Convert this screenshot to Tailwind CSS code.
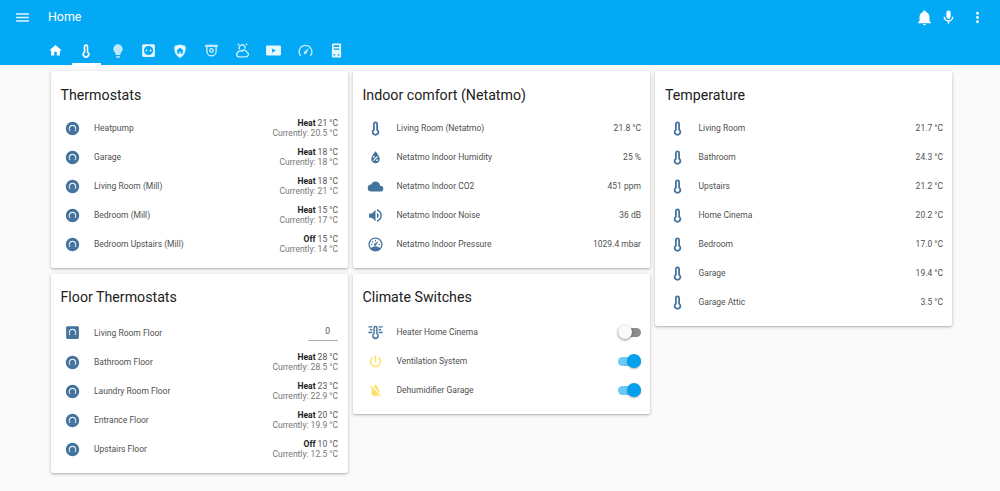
<!DOCTYPE html>
<html lang="en">
  <head>
    <meta charset="UTF-8" />
    <meta name="viewport" content="width=device-width, initial-scale=1.0" />
    <title>Home</title>
    <script src="https://cdn.jsdelivr.net/npm/@tailwindcss/browser@4"></script>
  </head>
  <body class="bg-[#fafafa] font-['Roboto',sans-serif] h-[491px] overflow-hidden">
    <!-- icon sheet -->
    <svg class="hidden">
      <symbol id="i-therm-outline" viewBox="0 0 24 24"><path d="M15.500 13V5.500A3.500 3.500 0 0 0 8.500 5.500V13A5.300 5.300 0 1 0 15.500 13M12 4.500A1 1 0 0 1 13 5.500V14.400A2.600 2.600 0 1 1 11 14.400V5.500A1 1 0 0 1 12 4.500Z" fill-rule="evenodd"/></symbol>
      <symbol id="i-thermostat" viewBox="0 0 24 24"><path fill-rule="evenodd" d="M12 2.500A9.500 9.500 0 1 1 12 21.500A9.500 9.500 0 1 1 12 2.500ZM12 6.800A5.400 5.400 0 0 0 8 15.800L9.200 14.900A3.900 3.900 0 1 1 14.800 14.900L16 15.800A5.400 5.400 0 0 0 12 6.800Z"/></symbol>
      <symbol id="i-thermostat-box" viewBox="0 0 24 24"><path fill-rule="evenodd" d="M5 3H19A2 2 0 0 1 21 5V19A2 2 0 0 1 19 21H5A2 2 0 0 1 3 19V5A2 2 0 0 1 5 3ZM12 6.800A5.400 5.400 0 0 0 8 15.800L9.200 14.900A3.900 3.900 0 1 1 14.800 14.900L16 15.800A5.400 5.400 0 0 0 12 6.800Z"/></symbol>
      <symbol id="i-drop" viewBox="0 0 24 24"><path fill-rule="evenodd" d="M12,3.25C12,3.25 6,10 6,14C6,17.32 8.69,20 12,20A6,6 0 0,0 18,14C18,10 12,3.25 12,3.25M14.47,9.97L15.53,11.03L9.53,17.03L8.47,15.97M9.75,10A1.25,1.25 0 0,1 11,11.25A1.25,1.25 0 0,1 9.75,12.5A1.25,1.25 0 0,1 8.5,11.25A1.25,1.25 0 0,1 9.75,10M14.25,14.5A1.25,1.25 0 0,1 15.5,15.75A1.25,1.25 0 0,1 14.25,17A1.25,1.25 0 0,1 13,15.75A1.25,1.25 0 0,1 14.25,14.5Z"/></symbol>
      <symbol id="i-cloud" viewBox="0 0 24 24"><path d="M6,19A5,5 0 0,1 1,14A5,5 0 0,1 6,9C7,6.65 9.3,5 12,5C15.43,5 18.24,7.66 18.5,11.03L19,11A4,4 0 0,1 23,15A4,4 0 0,1 19,19H6Z"/></symbol>
      <symbol id="i-volume" viewBox="0 0 24 24"><path d="M14,3.23V5.29C16.89,6.15 19,8.83 19,12C19,15.17 16.89,17.84 14,18.7V20.77C18,19.86 21,16.28 21,12C21,7.72 18,4.14 14,3.23M16.5,12C16.5,10.23 15.5,8.71 14,7.97V16C15.5,15.29 16.5,13.76 16.5,12M3,9V15H7L12,20V4L7,9H3Z"/></symbol>
      <symbol id="i-pressure" viewBox="0 0 24 24"><path fill-rule="evenodd" d="M12 2A10 10 0 1 1 12 22A10 10 0 1 1 12 2ZM12 4A8 8 0 0 0 5.700 17A9 9 0 0 1 18.300 17A8 8 0 0 0 12 4Z"/><path d="M16.500 7.500L13.200 12.400A1.700 1.700 0 1 1 10.900 10.600Z"/><path d="M5.500 11.200H7.600V12.600H5.500ZM7.600 7.200L9.100 8.600L8.100 9.600L6.700 8.200ZM11.300 5.600H12.700V7.700H11.300ZM16.400 11.200H18.500V12.600H16.400Z"/></symbol>
      <symbol id="i-radiator" viewBox="0 0 24 24"><path d="M15 13V5.500A3 3 0 0 0 9 5.500V13A4.800 4.800 0 1 0 15 13ZM12 4.500A1 1 0 0 1 13 5.500V14A2.500 2.500 0 1 1 11 14V5.500A1 1 0 0 1 12 4.500Z" fill-rule="evenodd"/><path d="M2 3H7.500V5H2ZM4 7H7.500V9H4ZM2 11H7.500V13H2ZM16.500 3H22V5H16.500ZM16.500 7H20V9H16.500ZM16.500 11H22V13H16.500Z"/></symbol>
      <symbol id="i-power" viewBox="0 0 24 24"><path d="M16.56,5.44L15.11,6.89C16.84,7.94 18,9.83 18,12A6,6 0 0,1 12,18A6,6 0 0,1 6,12C6,9.83 7.16,7.94 8.88,6.88L7.44,5.44C5.36,6.88 4,9.28 4,12A8,8 0 0,0 12,20A8,8 0 0,0 20,12C20,9.28 18.64,6.88 16.56,5.44M13,3H11V13H13"/></symbol>
      <symbol id="i-water-off" viewBox="0 0 24 24"><path d="M17.12,17.12L12.5,12.5L5.27,5.27L4,6.55L7.32,9.87C6.55,11.32 6,12.79 6,14A6,6 0 0,0 12,20C13.5,20 14.9,19.43 15.96,18.5L18.59,21.13L19.86,19.86L17.12,17.12M18,14C18,10 12,3.2 12,3.2C12,3.2 10.67,4.71 9.27,6.72L17.86,15.31C17.95,14.89 18,14.45 18,14Z"/></symbol>
    </svg>

    <header class="bg-[#03a9f4] h-[65px] text-white">
      <div class="h-[35px] flex items-center">
        <svg class="w-[17px] h-[17px] ml-[13.5px] fill-white/90" viewBox="0 0 24 24"><path d="M3,6H21V8H3V6M3,11H21V13H3V11M3,16H21V18H3V16Z"/></svg>
        <div class="ml-[17.5px] mb-[1px] text-[12.4px] leading-5">Home</div>
        <div class="ml-auto flex items-center">
          <svg class="w-[17px] h-[17px] fill-white" viewBox="0 0 24 24"><path d="M21,19V20H3V19L5,17V11C5,7.9 7.03,5.17 10,4.29C10,4.19 10,4.1 10,4A2,2 0 0,1 12,2A2,2 0 0,1 14,4C14,4.1 14,4.19 14,4.29C16.97,5.17 19,7.9 19,11V17L21,19M14,21A2,2 0 0,1 12,23A2,2 0 0,1 10,21"/></svg>
          <svg class="w-[17px] h-[17px] ml-[7px] fill-white" viewBox="0 0 24 24"><path d="M12,2A3,3 0 0,1 15,5V11A3,3 0 0,1 12,14A3,3 0 0,1 9,11V5A3,3 0 0,1 12,2M19,11C19,14.53 16.39,17.44 13,17.93V21H11V17.93C7.61,17.44 5,14.53 5,11H7A5,5 0 0,0 12,16A5,5 0 0,0 17,11H19Z"/></svg>
          <svg class="w-[17px] h-[17px] ml-[12px] mr-[14.5px] fill-white" viewBox="0 0 24 24"><path d="M12,16A2,2 0 0,1 14,18A2,2 0 0,1 12,20A2,2 0 0,1 10,18A2,2 0 0,1 12,16M12,10A2,2 0 0,1 14,12A2,2 0 0,1 12,14A2,2 0 0,1 10,12A2,2 0 0,1 12,10M12,4A2,2 0 0,1 14,6A2,2 0 0,1 12,8A2,2 0 0,1 10,6A2,2 0 0,1 12,4Z"/></svg>
        </div>
      </div>
      <nav class="h-[30px] flex pl-[39.5px]">
        <div class="w-[31.25px] h-[30px] flex items-center justify-center pt-[1px]">
          <svg class="w-[15px] h-[15px] fill-white" viewBox="0 0 24 24"><path d="M10,20V14H14V20H19V12H22L12,3L2,12H5V20H10Z"/></svg>
        </div>
        <div class="w-[31.25px] h-[30px] flex items-center justify-center pt-[1px] relative">
          <svg class="w-[16px] h-[16px] fill-white" viewBox="0 0 24 24"><use href="#i-therm-outline"/></svg>
          <div class="absolute left-[1px] right-[1px] bottom-0 h-[2px] bg-white"></div>
        </div>
        <div class="w-[31.25px] h-[30px] flex items-center justify-center pt-[1px] opacity-75">
          <svg class="w-[16px] h-[16px] fill-white" viewBox="0 0 24 24"><path d="M12,2A7,7 0 0,0 5,9C5,11.38 6.19,13.47 8,14.74V17A1,1 0 0,0 9,18H15A1,1 0 0,0 16,17V14.74C17.81,13.47 19,11.38 19,9A7,7 0 0,0 12,2M9,21A1,1 0 0,0 10,22H14A1,1 0 0,0 15,21V20H9V21Z"/></svg>
        </div>
        <div class="w-[31.25px] h-[30px] flex items-center justify-center pt-[1px] opacity-90">
          <svg class="w-[17px] h-[17px] fill-white" viewBox="0 0 24 24"><path fill-rule="evenodd" d="M5 3H19A2 2 0 0 1 21 5V19A2 2 0 0 1 19 21H5A2 2 0 0 1 3 19V5A2 2 0 0 1 5 3ZM12 5.500A6.500 6.500 0 1 0 12 18.500A6.500 6.500 0 1 0 12 5.500ZM9 10.700A1.300 1.300 0 1 1 9 13.300A1.300 1.300 0 1 1 9 10.700ZM15 10.700A1.300 1.300 0 1 1 15 13.300A1.300 1.300 0 1 1 15 10.700Z"/></svg>
        </div>
        <div class="w-[31.25px] h-[30px] flex items-center justify-center pt-[1px] opacity-90">
          <svg class="w-[16px] h-[16px] fill-white" viewBox="0 0 24 24"><path fill-rule="evenodd" d="M12,2C15,3.500 17.500,4 20,4C21,9 21,17 12,22.500C3,17 3,9 4,4C6.500,4 9,3.500 12,2ZM11,13H13V16H16V11.500H17.500L12,7L6.500,11.500H8V16H11V13Z"/></svg>
        </div>
        <div class="w-[31.25px] h-[30px] flex items-center justify-center pt-[1px] opacity-75">
          <svg class="w-[17px] h-[17px] fill-white" viewBox="0 0 24 24"><path fill-rule="evenodd" d="M3 4H21V7H19.500V13A7.500 7.500 0 0 1 4.500 13V7H3ZM6.500 7V13A5.500 5.500 0 0 0 17.500 13V7ZM12 8.500A3.500 3.500 0 1 1 12 15.500A3.500 3.500 0 1 1 12 8.500ZM12 10.500A1.500 1.500 0 1 0 12 13.500A1.500 1.500 0 1 0 12 10.500Z"/></svg>
        </div>
        <div class="w-[31.25px] h-[30px] flex items-center justify-center pt-[1px] opacity-80">
          <svg class="w-[17px] h-[17px] fill-none stroke-white stroke-2" viewBox="0 0 24 24"><path d="M8 10.500A4.200 4.200 0 1 1 15.500 9.500M7 21H17A3.500 3.500 0 0 0 18 14.200C17 11 13 10.500 11.500 13C8.500 11.500 5 13.500 5 15.500C2.500 17 3.500 21 7 21ZM5.500 2.500L7 4.500M18.500 2.500L17 4.500"/></svg>
        </div>
        <div class="w-[31.25px] h-[30px] flex items-center justify-center pt-[1px] opacity-90">
          <svg class="w-[17px] h-[17px] fill-white" viewBox="0 0 24 24"><path fill-rule="evenodd" d="M3 5H21A1.500 1.500 0 0 1 22.500 6.500V17.500A1.500 1.500 0 0 1 21 19H3A1.500 1.500 0 0 1 1.500 17.500V6.500A1.500 1.500 0 0 1 3 5ZM10 9V15L15 12Z"/></svg>
        </div>
        <div class="w-[31.25px] h-[30px] flex items-center justify-center pt-[1px] opacity-75">
          <svg class="w-[17px] h-[17px] fill-white" viewBox="0 0 24 24"><path fill-rule="evenodd" d="M12 4A10 10 0 0 1 19.500 20.500L18 19A8 8 0 1 0 6 19L4.500 20.500A10 10 0 0 1 12 4Z"/><path d="M17 8L13.500 15.500A2 2 0 1 1 10.500 13.500Z"/></svg>
        </div>
        <div class="w-[31.25px] h-[30px] flex items-center justify-center pt-[1px] opacity-90">
          <svg class="w-[17px] h-[17px] fill-white" viewBox="0 0 24 24"><path fill-rule="evenodd" d="M7 2H17A1.500 1.500 0 0 1 18.500 3.500V20.500A1.500 1.500 0 0 1 17 22H7A1.500 1.500 0 0 1 5.500 20.500V3.500A1.500 1.500 0 0 1 7 2ZM8 4.500V7H16V4.500ZM8 9V11H16V9ZM8 17V19.500H10V17ZM14 17V19.500H16V17Z"/></svg>
        </div>
      </nav>
    </header>

    <main class="flex gap-[5px] pl-[51px] pt-[6px] items-start">
      <!-- column 1 -->
      <div class="w-[297px] flex flex-col gap-[6px]">
        <section class="bg-white rounded-[2px] shadow-[0_1px_2px_rgba(0,0,0,0.2),0_1px_4px_rgba(0,0,0,0.14)] pb-[9.7px]">
          <h2 class="h-[42.8px] pt-[13.5px] pl-[9.5px] text-[14.2px] leading-5 text-[#212121]">Thermostats</h2>
          <div class="h-[29px] flex items-center pl-[13px] pr-[10px]">
            <svg class="w-[17px] h-[17px] fill-[#44739e] mr-[13px] shrink-0" viewBox="0 0 24 24"><use href="#i-thermostat"/></svg>
            <div class="text-[8.5px] text-[#505050]">Heatpump</div>
            <div class="ml-auto text-right text-[8.5px] leading-[10.5px] text-[#555]"><div><b class="text-[#212121] font-bold">Heat</b> 21 °C</div><div class="text-[#777]">Currently: 20.5 °C</div></div>
          </div>
          <div class="h-[29px] flex items-center pl-[13px] pr-[10px]">
            <svg class="w-[17px] h-[17px] fill-[#44739e] mr-[13px] shrink-0" viewBox="0 0 24 24"><use href="#i-thermostat"/></svg>
            <div class="text-[8.5px] text-[#505050]">Garage</div>
            <div class="ml-auto text-right text-[8.5px] leading-[10.5px] text-[#555]"><div><b class="text-[#212121] font-bold">Heat</b> 18 °C</div><div class="text-[#777]">Currently: 18 °C</div></div>
          </div>
          <div class="h-[29px] flex items-center pl-[13px] pr-[10px]">
            <svg class="w-[17px] h-[17px] fill-[#44739e] mr-[13px] shrink-0" viewBox="0 0 24 24"><use href="#i-thermostat"/></svg>
            <div class="text-[8.5px] text-[#505050]">Living Room (Mill)</div>
            <div class="ml-auto text-right text-[8.5px] leading-[10.5px] text-[#555]"><div><b class="text-[#212121] font-bold">Heat</b> 18 °C</div><div class="text-[#777]">Currently: 21 °C</div></div>
          </div>
          <div class="h-[29px] flex items-center pl-[13px] pr-[10px]">
            <svg class="w-[17px] h-[17px] fill-[#44739e] mr-[13px] shrink-0" viewBox="0 0 24 24"><use href="#i-thermostat"/></svg>
            <div class="text-[8.5px] text-[#505050]">Bedroom (Mill)</div>
            <div class="ml-auto text-right text-[8.5px] leading-[10.5px] text-[#555]"><div><b class="text-[#212121] font-bold">Heat</b> 15 °C</div><div class="text-[#777]">Currently: 17 °C</div></div>
          </div>
          <div class="h-[29px] flex items-center pl-[13px] pr-[10px]">
            <svg class="w-[17px] h-[17px] fill-[#44739e] mr-[13px] shrink-0" viewBox="0 0 24 24"><use href="#i-thermostat"/></svg>
            <div class="text-[8.5px] text-[#505050]">Bedroom Upstairs (Mill)</div>
            <div class="ml-auto text-right text-[8.5px] leading-[10.5px] text-[#555]"><div><b class="text-[#212121] font-bold">Off</b> 15 °C</div><div class="text-[#777]">Currently: 14 °C</div></div>
          </div>
        </section>

        <section class="bg-white rounded-[2px] shadow-[0_1px_2px_rgba(0,0,0,0.2),0_1px_4px_rgba(0,0,0,0.14)] pb-[9px]">
          <h2 class="h-[43.5px] pt-[13px] pl-[9.5px] text-[14.2px] leading-5 text-[#212121]">Floor Thermostats</h2>
          <div class="h-[30px] flex items-center pl-[13px] pr-[10px]">
            <svg class="w-[17px] h-[17px] fill-[#44739e] mr-[13px] shrink-0" viewBox="0 0 24 24"><use href="#i-thermostat-box"/></svg>
            <div class="text-[8.5px] text-[#505050]">Living Room Floor</div>
            <div class="ml-auto w-[30px] h-[17px] mb-[1px] border-b border-[#b0b0b0] text-[8.5px] leading-[14px] text-[#505050] text-right pr-[8px]">0</div>
          </div>
          <div class="h-[29px] flex items-center pl-[13px] pr-[10px]">
            <svg class="w-[17px] h-[17px] fill-[#44739e] mr-[13px] shrink-0" viewBox="0 0 24 24"><use href="#i-thermostat"/></svg>
            <div class="text-[8.5px] text-[#505050]">Bathroom Floor</div>
            <div class="ml-auto text-right text-[8.5px] leading-[10.5px] text-[#555]"><div><b class="text-[#212121] font-bold">Heat</b> 28 °C</div><div class="text-[#777]">Currently: 28.5 °C</div></div>
          </div>
          <div class="h-[29px] flex items-center pl-[13px] pr-[10px]">
            <svg class="w-[17px] h-[17px] fill-[#44739e] mr-[13px] shrink-0" viewBox="0 0 24 24"><use href="#i-thermostat"/></svg>
            <div class="text-[8.5px] text-[#505050]">Laundry Room Floor</div>
            <div class="ml-auto text-right text-[8.5px] leading-[10.5px] text-[#555]"><div><b class="text-[#212121] font-bold">Heat</b> 23 °C</div><div class="text-[#777]">Currently: 22.9 °C</div></div>
          </div>
          <div class="h-[29px] flex items-center pl-[13px] pr-[10px]">
            <svg class="w-[17px] h-[17px] fill-[#44739e] mr-[13px] shrink-0" viewBox="0 0 24 24"><use href="#i-thermostat"/></svg>
            <div class="text-[8.5px] text-[#505050]">Entrance Floor</div>
            <div class="ml-auto text-right text-[8.5px] leading-[10.5px] text-[#555]"><div><b class="text-[#212121] font-bold">Heat</b> 20 °C</div><div class="text-[#777]">Currently: 19.9 °C</div></div>
          </div>
          <div class="h-[29px] flex items-center pl-[13px] pr-[10px]">
            <svg class="w-[17px] h-[17px] fill-[#44739e] mr-[13px] shrink-0" viewBox="0 0 24 24"><use href="#i-thermostat"/></svg>
            <div class="text-[8.5px] text-[#505050]">Upstairs Floor</div>
            <div class="ml-auto text-right text-[8.5px] leading-[10.5px] text-[#555]"><div><b class="text-[#212121] font-bold">Off</b> 10 °C</div><div class="text-[#777]">Currently: 12.5 °C</div></div>
          </div>
        </section>
      </div>

      <!-- column 2 -->
      <div class="w-[297px] flex flex-col gap-[6px]">
        <section class="bg-white rounded-[2px] shadow-[0_1px_2px_rgba(0,0,0,0.2),0_1px_4px_rgba(0,0,0,0.14)] pb-[9.7px]">
          <h2 class="h-[42.8px] pt-[13.5px] pl-[9.5px] text-[14.2px] leading-5 text-[#212121]">Indoor comfort (Netatmo)</h2>
          <div class="h-[29px] flex items-center pl-[13.500px] pr-[9px]">
            <svg class="w-[17px] h-[17px] fill-[#44739e] mr-[13px] shrink-0" viewBox="0 0 24 24"><use href="#i-therm-outline"/></svg>
            <div class="text-[8.5px] text-[#505050]">Living Room (Netatmo)</div>
            <div class="ml-auto text-[8.5px] text-[#505050]">21.8 °C</div>
          </div>
          <div class="h-[29px] flex items-center pl-[13.500px] pr-[9px]">
            <svg class="w-[17px] h-[17px] fill-[#44739e] mr-[13px] shrink-0" viewBox="0 0 24 24"><use href="#i-drop"/></svg>
            <div class="text-[8.5px] text-[#505050]">Netatmo Indoor Humidity</div>
            <div class="ml-auto text-[8.5px] text-[#505050]">25 %</div>
          </div>
          <div class="h-[29px] flex items-center pl-[13.500px] pr-[9px]">
            <svg class="w-[17px] h-[17px] fill-[#44739e] mr-[13px] shrink-0" viewBox="0 0 24 24"><use href="#i-cloud"/></svg>
            <div class="text-[8.5px] text-[#505050]">Netatmo Indoor CO2</div>
            <div class="ml-auto text-[8.5px] text-[#505050]">451 ppm</div>
          </div>
          <div class="h-[29px] flex items-center pl-[13.500px] pr-[9px]">
            <svg class="w-[17px] h-[17px] fill-[#44739e] mr-[13px] shrink-0" viewBox="0 0 24 24"><use href="#i-volume"/></svg>
            <div class="text-[8.5px] text-[#505050]">Netatmo Indoor Noise</div>
            <div class="ml-auto text-[8.5px] text-[#505050]">36 dB</div>
          </div>
          <div class="h-[29px] flex items-center pl-[13.500px] pr-[9px]">
            <svg class="w-[17px] h-[17px] fill-[#44739e] mr-[13px] shrink-0" viewBox="0 0 24 24"><use href="#i-pressure"/></svg>
            <div class="text-[8.5px] text-[#505050]">Netatmo Indoor Pressure</div>
            <div class="ml-auto text-[8.5px] text-[#505050]">1029.4 mbar</div>
          </div>
        </section>

        <section class="bg-white rounded-[2px] shadow-[0_1px_2px_rgba(0,0,0,0.2),0_1px_4px_rgba(0,0,0,0.14)] pb-[9px]">
          <h2 class="h-[43.5px] pt-[13px] pl-[9.5px] text-[14.2px] leading-5 text-[#212121]">Climate Switches</h2>
          <div class="h-[29px] flex items-center pl-[13.500px] pr-[9.5px]">
            <svg class="w-[17px] h-[17px] fill-[#44739e] mr-[13px] shrink-0" viewBox="0 0 24 24"><use href="#i-radiator"/></svg>
            <div class="text-[8.5px] text-[#505050]">Heater Home Cinema</div>
            <div class="ml-auto relative w-[23px] h-[9px] rounded-full bg-[#8c8c8c]">
              <div class="absolute left-0 top-[-2.5px] w-[14px] h-[14px] rounded-full bg-[#fafafa] shadow-[0_1px_3px_rgba(0,0,0,0.45)]"></div>
            </div>
          </div>
          <div class="h-[29px] flex items-center pl-[13.500px] pr-[9.5px]">
            <svg class="w-[17px] h-[17px] fill-[#fbe165] mr-[13px] shrink-0" viewBox="0 0 24 24"><use href="#i-power"/></svg>
            <div class="text-[8.5px] text-[#505050]">Ventilation System</div>
            <div class="ml-auto relative w-[23px] h-[9px] rounded-full bg-[#6cc8f5]">
              <div class="absolute right-0 top-[-2.5px] w-[14px] h-[14px] rounded-full bg-[#03a0ee] shadow-[0_1px_2px_rgba(0,0,0,0.3)]"></div>
            </div>
          </div>
          <div class="h-[29px] flex items-center pl-[13.500px] pr-[9.5px]">
            <svg class="w-[17px] h-[17px] fill-[#fbe165] mr-[13px] shrink-0" viewBox="0 0 24 24"><use href="#i-water-off"/></svg>
            <div class="text-[8.5px] text-[#505050]">Dehumidifier Garage</div>
            <div class="ml-auto relative w-[23px] h-[9px] rounded-full bg-[#6cc8f5]">
              <div class="absolute right-0 top-[-2.5px] w-[14px] h-[14px] rounded-full bg-[#03a0ee] shadow-[0_1px_2px_rgba(0,0,0,0.3)]"></div>
            </div>
          </div>
        </section>
      </div>

      <!-- column 3 -->
      <div class="w-[297px]">
        <section class="bg-white rounded-[2px] shadow-[0_1px_2px_rgba(0,0,0,0.2),0_1px_4px_rgba(0,0,0,0.14)] pb-[9.7px]">
          <h2 class="h-[42.8px] pt-[13.5px] pl-[10px] text-[14.2px] leading-5 text-[#212121]">Temperature</h2>
          <div class="h-[29px] flex items-center pl-[13.500px] pr-[9px]">
            <svg class="w-[17px] h-[17px] fill-[#44739e] mr-[13px] shrink-0" viewBox="0 0 24 24"><use href="#i-therm-outline"/></svg>
            <div class="text-[8.5px] text-[#505050]">Living Room</div>
            <div class="ml-auto text-[8.5px] text-[#505050]">21.7 °C</div>
          </div>
          <div class="h-[29px] flex items-center pl-[13.500px] pr-[9px]">
            <svg class="w-[17px] h-[17px] fill-[#44739e] mr-[13px] shrink-0" viewBox="0 0 24 24"><use href="#i-therm-outline"/></svg>
            <div class="text-[8.5px] text-[#505050]">Bathroom</div>
            <div class="ml-auto text-[8.5px] text-[#505050]">24.3 °C</div>
          </div>
          <div class="h-[29px] flex items-center pl-[13.500px] pr-[9px]">
            <svg class="w-[17px] h-[17px] fill-[#44739e] mr-[13px] shrink-0" viewBox="0 0 24 24"><use href="#i-therm-outline"/></svg>
            <div class="text-[8.5px] text-[#505050]">Upstairs</div>
            <div class="ml-auto text-[8.5px] text-[#505050]">21.2 °C</div>
          </div>
          <div class="h-[29px] flex items-center pl-[13.500px] pr-[9px]">
            <svg class="w-[17px] h-[17px] fill-[#44739e] mr-[13px] shrink-0" viewBox="0 0 24 24"><use href="#i-therm-outline"/></svg>
            <div class="text-[8.5px] text-[#505050]">Home Cinema</div>
            <div class="ml-auto text-[8.5px] text-[#505050]">20.2 °C</div>
          </div>
          <div class="h-[29px] flex items-center pl-[13.500px] pr-[9px]">
            <svg class="w-[17px] h-[17px] fill-[#44739e] mr-[13px] shrink-0" viewBox="0 0 24 24"><use href="#i-therm-outline"/></svg>
            <div class="text-[8.5px] text-[#505050]">Bedroom</div>
            <div class="ml-auto text-[8.5px] text-[#505050]">17.0 °C</div>
          </div>
          <div class="h-[29px] flex items-center pl-[13.500px] pr-[9px]">
            <svg class="w-[17px] h-[17px] fill-[#44739e] mr-[13px] shrink-0" viewBox="0 0 24 24"><use href="#i-therm-outline"/></svg>
            <div class="text-[8.5px] text-[#505050]">Garage</div>
            <div class="ml-auto text-[8.5px] text-[#505050]">19.4 °C</div>
          </div>
          <div class="h-[29px] flex items-center pl-[13.500px] pr-[9px]">
            <svg class="w-[17px] h-[17px] fill-[#44739e] mr-[13px] shrink-0" viewBox="0 0 24 24"><use href="#i-therm-outline"/></svg>
            <div class="text-[8.5px] text-[#505050]">Garage Attic</div>
            <div class="ml-auto text-[8.5px] text-[#505050]">3.5 °C</div>
          </div>
        </section>
      </div>
    </main>
  </body>
</html>
